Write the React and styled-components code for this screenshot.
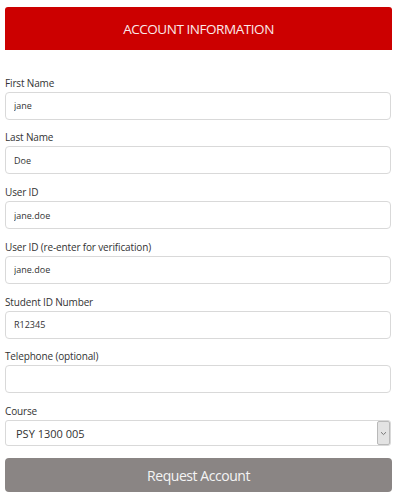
import React from 'react';
import styled, { createGlobalStyle } from 'styled-components';

const GlobalStyle = createGlobalStyle`
  body {
    margin: 0;
    background: #fff;
    font-family: 'Open Sans', 'Liberation Sans', sans-serif;
  }
`;

const Page = styled.div`
  padding: 7px 5px 0 5px;
  width: 387px;
`;

const Header = styled.div`
  height: 43px;
  background-color: #cc0000;
  border-radius: 3px 3px 0 0;
  display: flex;
  align-items: center;
  justify-content: center;
`;

const Title = styled.h1`
  margin: 0;
  color: #fbe9e9;
  font-size: 13.5px;
  font-weight: 400;
  letter-spacing: -0.45px;
`;

const Form = styled.form`
  margin-top: 24.5px;
  display: flex;
  flex-direction: column;
`;

const Field = styled.div`
  display: flex;
  flex-direction: column;
  margin-bottom: ${({ last }) => (last ? '12px' : '9.8px')};
`;

const Label = styled.label`
  font-size: 10px;
  line-height: 17px;
  letter-spacing: -0.15px;
  color: #333;
`;

const Input = styled.input`
  box-sizing: border-box;
  width: 386px;
  height: 28px;
  border: 1px solid #d9d9d9;
  border-radius: 4px;
  padding: 0 8px;
  font-family: inherit;
  font-size: 9px;
  color: #333;
  outline: none;
`;

const SelectBox = styled.div`
  box-sizing: border-box;
  width: 386px;
  height: 26px;
  border: 1px solid #d9d9d9;
  border-radius: 3px;
  display: flex;
  align-items: stretch;
`;

const SelectValue = styled.div`
  flex: 1;
  display: flex;
  align-items: center;
  padding-left: 10px;
  font-size: 11px;
  color: #333;
`;

const Arrow = styled.div`
  width: 11px;
  background: #e3e3e3;
  border: 1px solid #b9b9b9;
  border-radius: 2px;
  display: flex;
  align-items: center;
  justify-content: center;
`;

const Button = styled.button`
  width: 387px;
  height: 34px;
  border: none;
  border-radius: 4px;
  background-color: #8a8584;
  color: #f4f4f4;
  font-family: inherit;
  font-size: 14px;
  letter-spacing: -0.45px;
  cursor: pointer;
`;

const fields = [
  { label: 'First Name', value: 'jane' },
  { label: 'Last Name', value: 'Doe' },
  { label: 'User ID', value: 'jane.doe' },
  { label: 'User ID (re-enter for verification)', value: 'jane.doe' },
  { label: 'Student ID Number', value: 'R12345' },
  { label: 'Telephone (optional)', value: '' },
];

export default function App() {
  return (
    <Page>
      <GlobalStyle />
      <Header>
        <Title>ACCOUNT INFORMATION</Title>
      </Header>
      <Form onSubmit={(e) => e.preventDefault()}>
        {fields.map((f) => (
          <Field key={f.label}>
            <Label>{f.label}</Label>
            <Input defaultValue={f.value} />
          </Field>
        ))}
        <Field last>
          <Label>Course</Label>
          <SelectBox>
            <SelectValue>PSY 1300 005</SelectValue>
            <Arrow>
              <svg width="7" height="5" viewBox="0 0 7 5">
                <path d="M1 1.2 L3.5 3.6 L6 1.2" fill="none" stroke="#777" strokeWidth="1" />
              </svg>
            </Arrow>
          </SelectBox>
        </Field>
        <Button type="submit">Request Account</Button>
      </Form>
    </Page>
  );
}
